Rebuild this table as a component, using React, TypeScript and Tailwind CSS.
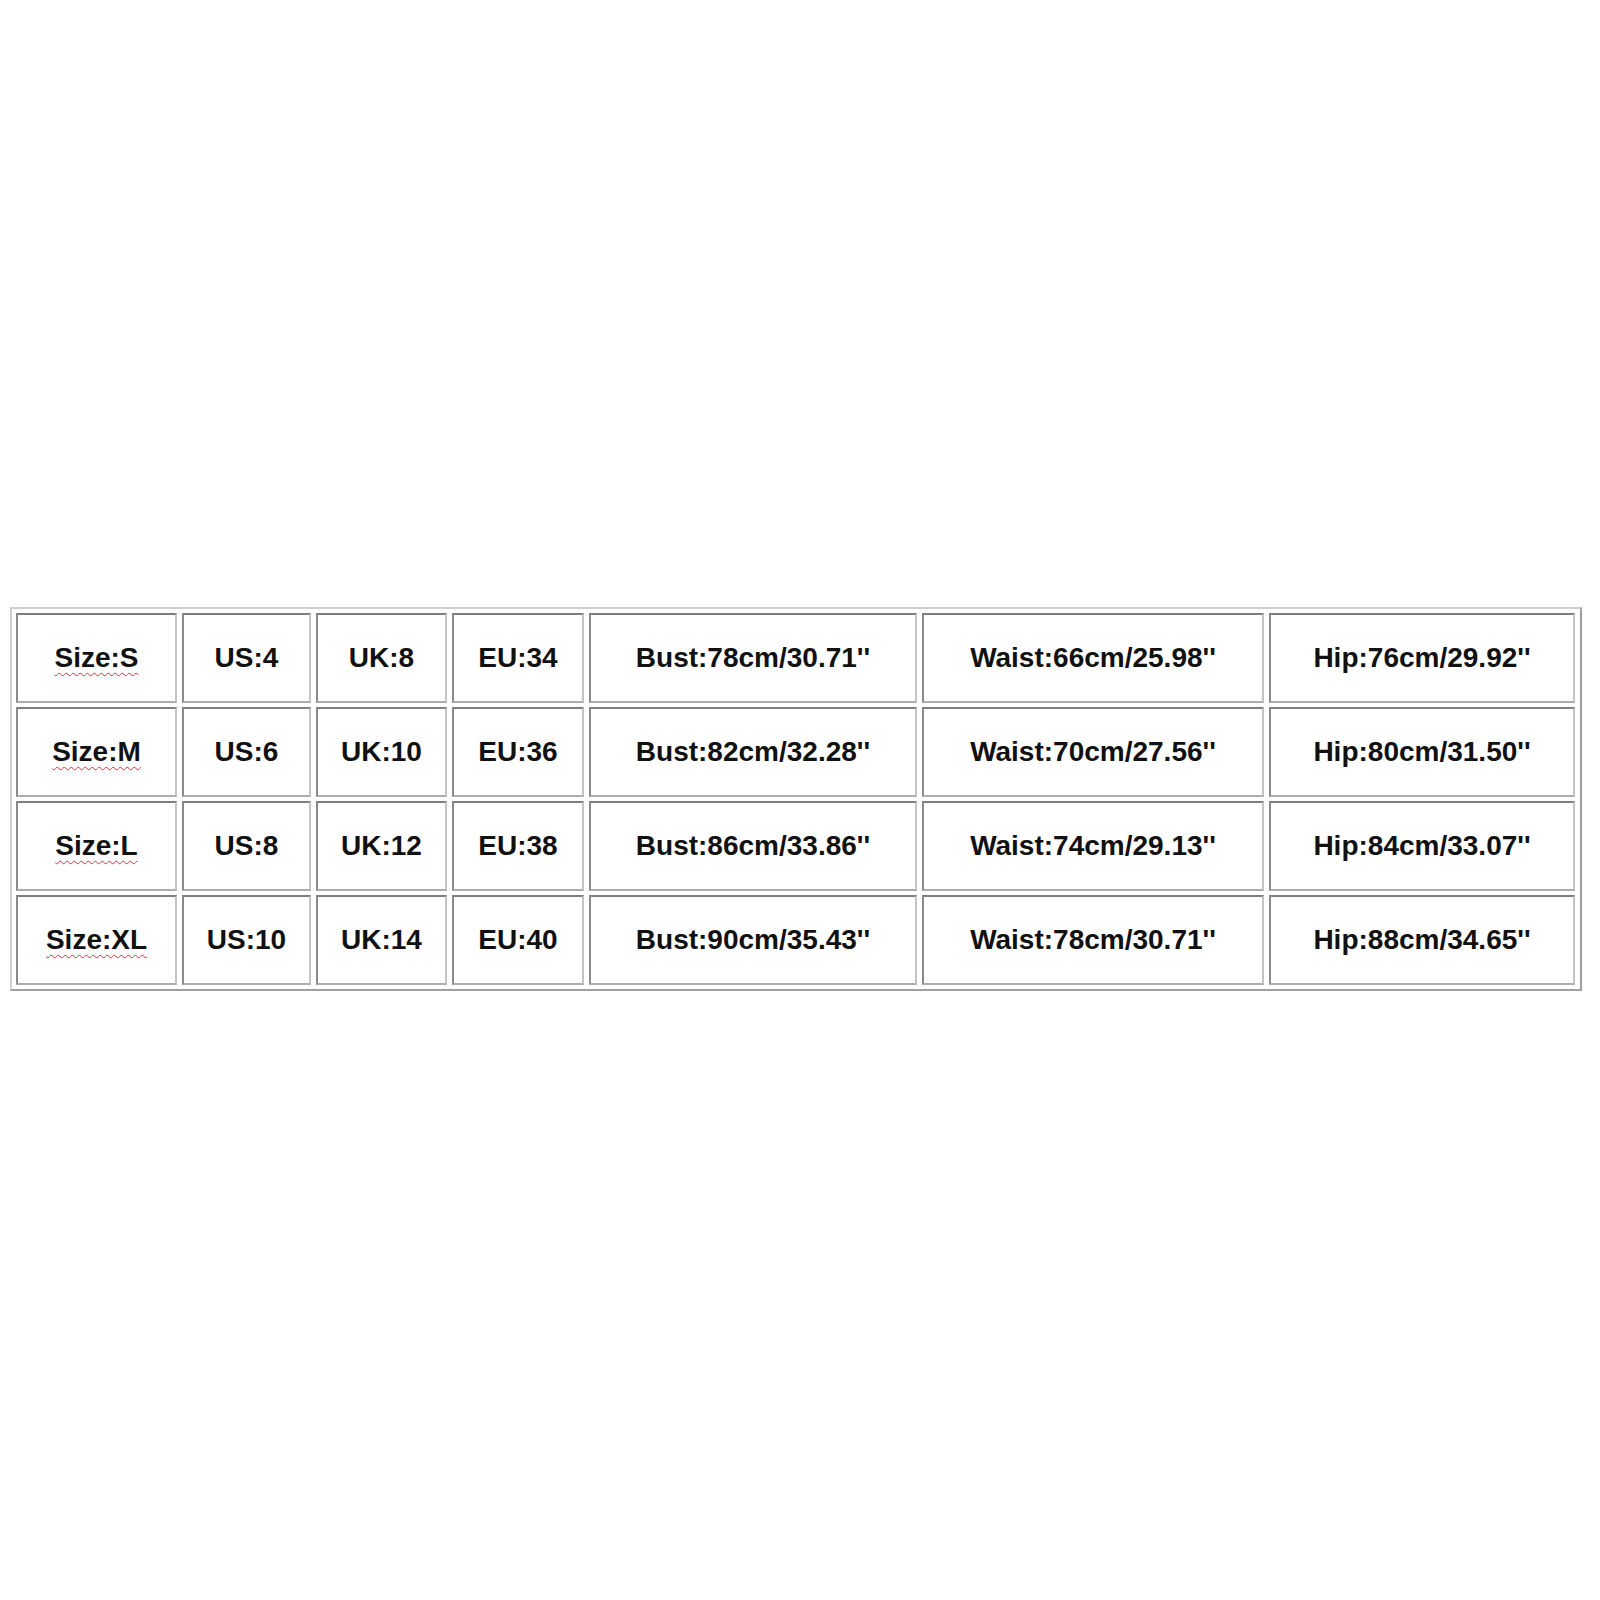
const rows = [
  ['Size:S', 'US:4', 'UK:8', 'EU:34', 'Bust:78cm/30.71\'\'', 'Waist:66cm/25.98\'\'', 'Hip:76cm/29.92\'\''],
  ['Size:M', 'US:6', 'UK:10', 'EU:36', 'Bust:82cm/32.28\'\'', 'Waist:70cm/27.56\'\'', 'Hip:80cm/31.50\'\''],
  ['Size:L', 'US:8', 'UK:12', 'EU:38', 'Bust:86cm/33.86\'\'', 'Waist:74cm/29.13\'\'', 'Hip:84cm/33.07\'\''],
  ['Size:XL', 'US:10', 'UK:14', 'EU:40', 'Bust:90cm/35.43\'\'', 'Waist:78cm/30.71\'\'', 'Hip:88cm/34.65\'\''],
];

export default function App() {
  return (
    <div className="min-h-[1600px] w-[1600px] bg-white pt-[607px] pl-[10px] font-['Liberation_Sans',Arial,sans-serif]">
      <div className="w-[1572px] border-2 border-t-[#cfcfcf] border-l-[#cfcfcf] border-r-[#9f9f9f] border-b-[#9f9f9f] p-[4px]">
        <div className="grid grid-cols-[161px_129px_131px_132px_328px_342px_306px] auto-rows-[90px] gap-x-[5px] gap-y-[4px]">
          {rows.map((row, i) =>
            row.map((cell, j) => (
              <div
                key={`${i}-${j}`}
                className="flex items-center justify-center border-2 border-t-[#7f7f7f] border-l-[#8a8a8a] border-r-[#c4c4c4] border-b-[#adadad] text-[28px] font-bold text-[#111]"
              >
                {j === 0 ? (
                  <span className="underline decoration-wavy decoration-[#e0303a] decoration-1 underline-offset-[5px]">
                    {cell}
                  </span>
                ) : (
                  <span>{cell}</span>
                )}
              </div>
            ))
          )}
        </div>
      </div>
    </div>
  );
}
